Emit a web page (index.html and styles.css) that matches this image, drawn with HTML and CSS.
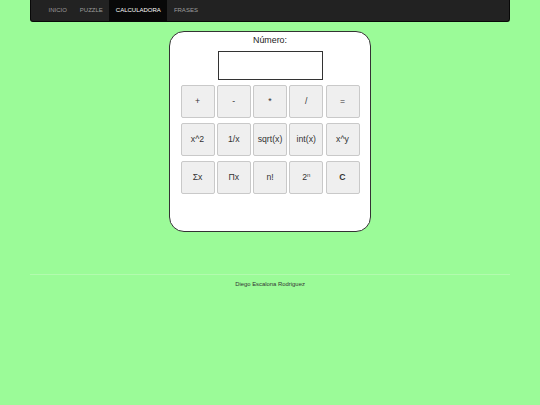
FILE: index.html
```html
<!DOCTYPE html>
<html lang="es">
<head>
<meta charset="utf-8">
<title>Calculadora</title>
<link rel="stylesheet" href="styles.css">
</head>
<body>
<div class="navbar">
  <ul class="nav">
    <li><a href="#">INICIO</a></li>
    <li><a href="#">PUZZLE</a></li>
    <li class="active"><a href="#">CALCULADORA</a></li>
    <li><a href="#">FRASES</a></li>
  </ul>
</div>
<main class="calc">
  <div class="label">Número:</div>
  <div class="display"></div>
  <div class="keys">
    <button class="key">+</button>
    <button class="key">-</button>
    <button class="key">*</button>
    <button class="key">/</button>
    <button class="key">=</button>
    <button class="key">x^2</button>
    <button class="key">1/x</button>
    <button class="key">sqrt(x)</button>
    <button class="key">int(x)</button>
    <button class="key">x^y</button>
    <button class="key">Σx</button>
    <button class="key">Πx</button>
    <button class="key">n!</button>
    <button class="key">2<sup>n</sup></button>
    <button class="key bold">C</button>
  </div>
</main>
<footer class="footer">
  <hr class="rule">
  <p class="credit">Diego Escalona Rodriguez</p>
</footer>
</body>
</html>
```
FILE: styles.css
```css
* { box-sizing: border-box; }
html, body { margin: 0; padding: 0; }
body {
  background: #9bfb98;
  font-family: "Liberation Sans", Arial, sans-serif;
  color: #333;
  height: 405px;
}
.navbar {
  margin: 0 30px;
  height: 22px;
  background: #222;
  border: 1px solid #080808;
  border-top: none;
  border-radius: 0 0 3px 3px;
  padding-left: 11px;
}
.nav {
  list-style: none;
  margin: 0;
  padding: 0;
  display: flex;
  height: 100%;
}
.nav li a {
  display: block;
  height: 21px;
  line-height: 21px;
  padding: 0 6.5px;
  font-size: 6px;
  color: #9d9d9d;
  text-decoration: none;
}
.nav li.active a {
  background: #080808;
  color: #fff;
}
.calc {
  width: 202px;
  height: 201px;
  margin: 9px auto 0;
  background: #fff;
  border: 1.5px solid #333;
  border-radius: 15px;
  display: flex;
  flex-direction: column;
  align-items: center;
  padding-top: 3px;
}
.label {
  font-size: 8.9px;
  color: #222;
  line-height: 11px;
}
.display {
  width: 105px;
  height: 29px;
  margin-top: 5px;
  border: 1.5px solid #333;
  background: #fff;
}
.keys {
  margin-top: 4.5px;
  display: grid;
  grid-template-columns: repeat(5, 34px);
  grid-auto-rows: 33.5px;
  column-gap: 2.25px;
  row-gap: 4.5px;
}
.key {
  margin: 0;
  padding: 0;
  background: #efefef;
  border: 1px solid #c9c9c9;
  border-radius: 2px;
  font-family: "Liberation Sans", Arial, sans-serif;
  font-size: 8.7px;
  color: #333;
}
.key sup {
  font-size: 6px;
  vertical-align: 3px;
  line-height: 0;
}
.key.bold { font-weight: bold; }
.footer {
  margin: 0 30px;
  padding-top: 42px;
  text-align: center;
}
.rule {
  margin: 0;
  border: none;
  border-top: 1px solid #b2fbae;
  height: 0;
}
.credit {
  margin: 6px 0 0;
  font-size: 5.9px;
  color: #333;
}
```
